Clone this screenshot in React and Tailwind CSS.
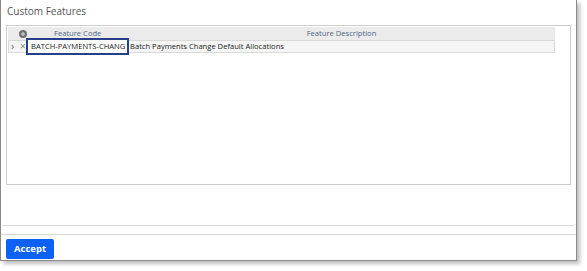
export default function App() {
  return (
    <div className="w-[587px] h-[271px] bg-white relative" style={{ fontFamily: "'Open Sans', sans-serif" }}>
      <div className="w-[577px] h-[261px] bg-white border-l border-r border-b border-[#8a8a8a] shadow-[3px_3px_4px_rgba(0,0,0,0.25)] flex flex-col">
        {/* Body */}
        <div className="flex-1 flex flex-col border-b border-[#d9d9d9] rounded-b-[3px] px-[5px]">
          <div className="h-[25px] pt-[4px] pl-[1px] text-[10px] text-[#555] leading-[14px]">Custom Features</div>
          <div className="h-[160px] border border-[#cccccc] pt-[1px] pl-[1px] pr-[15px]">
            {/* Header */}
            <div className="h-[13px] bg-[#ebebeb] flex items-center text-[7.6px] text-[#4d6787] leading-none">
              <div className="w-[46px] flex justify-start pl-[11px]">
                <svg width="8" height="8" viewBox="0 0 8 8">
                  <circle cx="4" cy="4" r="4" fill="#6f6f6f" />
                  <path d="M4 2v4M2 4h4" stroke="#c8c8c8" strokeWidth="1.3" />
                </svg>
              </div>
              <div className="w-[74px]">Feature Code</div>
              <div className="flex-1 text-center">Feature Description</div>
            </div>
            {/* Row */}
            <div className="h-[13px] bg-[#f5f5f5] border border-[#d9d9d9] flex items-center text-[7.6px] text-[#222] leading-none relative">
              <span className="w-[11px] pl-[2px] text-[#666] text-[11px] leading-none -mt-[2px]">›</span>
              <span className="w-[6px] text-[#888] text-[10px] leading-none -mt-[1px]">×</span>
              <div className="h-[17px] -my-[2px] w-[103px] border-2 border-[#27408b] bg-white flex items-center pl-[3px] text-[#222] z-10">
                BATCH-PAYMENTS-CHANG
              </div>
              <span className="pl-[1px]">Batch Payments Change Default Allocations</span>
            </div>
          </div>
        </div>
        {/* Footer */}
        <div className="h-[26px] mt-[8px] border-t border-[#d9d9d9] flex items-start pt-[4px] px-[5px]">
          <button className="h-[20px] w-[48px] rounded-[2px] bg-[#0d62f5] text-white text-[9.5px] font-bold leading-none">
            Accept
          </button>
        </div>
      </div>
    </div>
  );
}
